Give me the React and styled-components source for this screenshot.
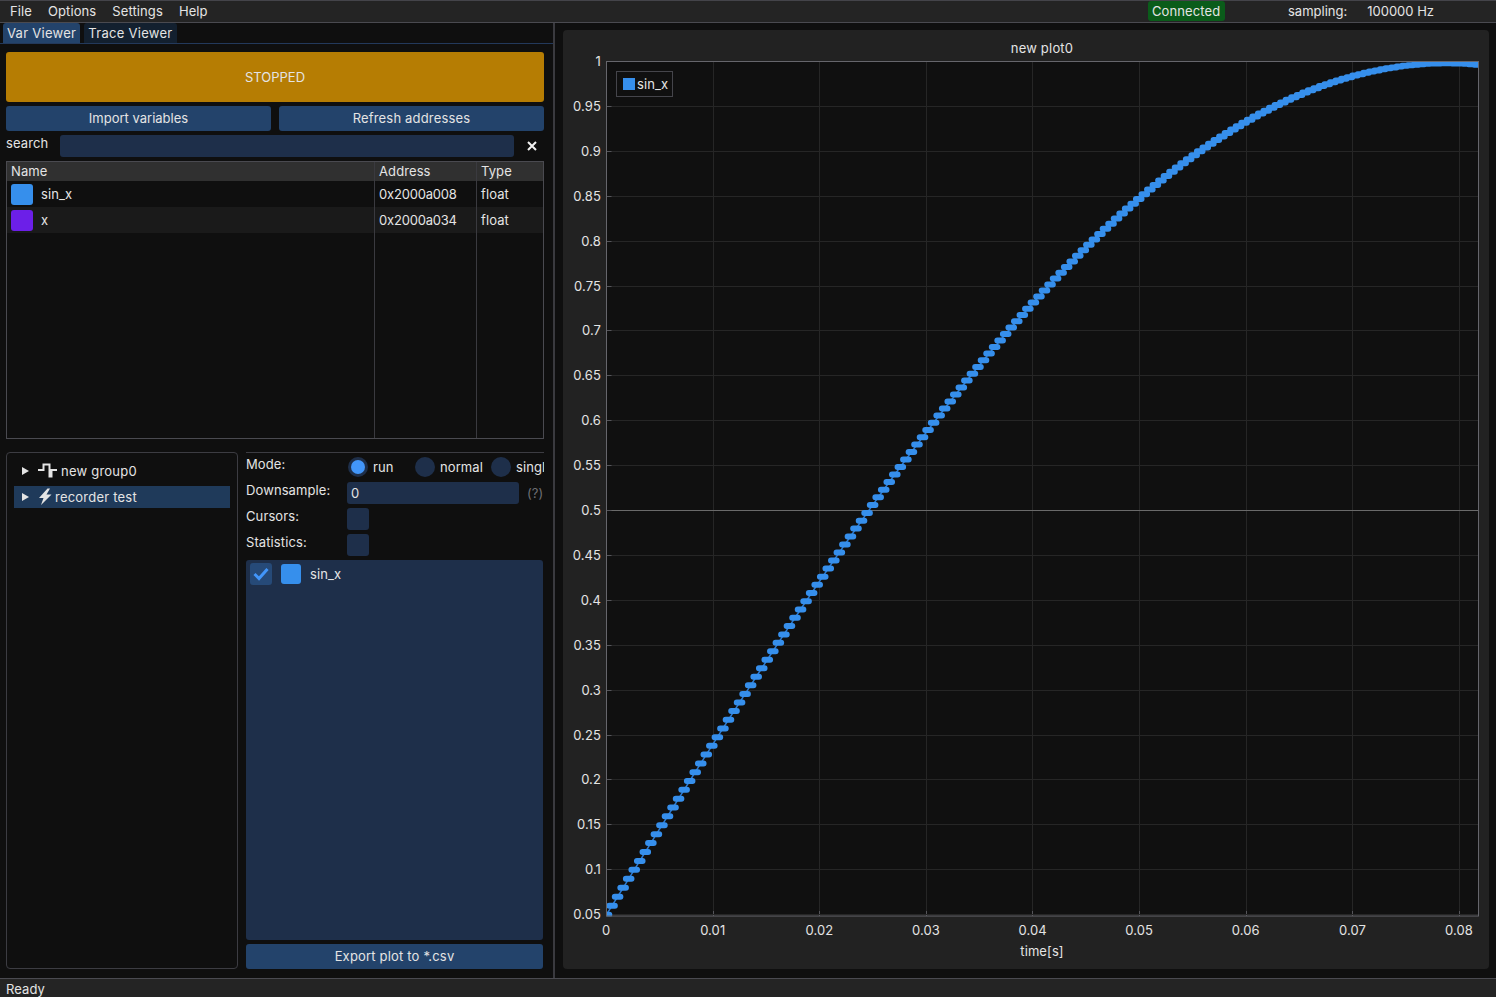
import React from "react";
import styled, { createGlobalStyle } from "styled-components";

const GlobalStyle = createGlobalStyle`
  html, body {
    margin: 0;
    padding: 0;
    background: #0f0f0f;
  }
  * {
    box-sizing: border-box;
  }
`;

const Page = styled.div`
  width: 1496px;
  height: 997px;
  display: flex;
  flex-direction: column;
  overflow: hidden;
  background: #0f0f0f;
  color: #e4e4e4;
  font-family: Inter, "Liberation Sans", sans-serif;
  font-size: 13px;
  line-height: 16px;
  letter-spacing: 0.1px;
`;

const MenuBar = styled.div`
  height: 23px;
  flex: none;
  display: flex;
  align-items: center;
  gap: 16px;
  padding: 0 10px 1px;
  background: #242424;
  border-top: 1px solid #44444a;
  border-bottom: 1px solid #4a4a50;
`;

const Connected = styled.div`
  margin-left: auto;
  height: 20px;
  width: 77px;
  padding-left: 4px;
  line-height: 20px;
  background: #0a5c1a;
  border-radius: 3px;
`;

const Sampling = styled.span`
  margin-left: 47px;
  letter-spacing: 0;
`;

const SamplingValue = styled.span`
  margin-left: 4px;
  margin-right: 52px;
  letter-spacing: 0;
`;

const Main = styled.div`
  flex: 1;
  min-height: 0;
  display: flex;
`;

const LeftColumn = styled.div`
  width: 553px;
  flex: none;
  display: flex;
  flex-direction: column;
  padding-bottom: 9px;
`;

const TabBar = styled.div`
  height: 21px;
  flex: none;
  display: flex;
  gap: 4px;
  padding-left: 3px;
  border-bottom: 1px solid #23395b;
`;

const Tab = styled.div`
  height: 20px;
  padding: 0 4px;
  line-height: 20px;
  letter-spacing: 0.28px;
  border-radius: 3px 3px 0 0;
  background: ${(p) => (p.$active ? "#23436b" : "#13202f")};
`;

const Content = styled.div`
  flex: 1;
  min-height: 0;
  display: flex;
  flex-direction: column;
  gap: 4px;
  padding: 8px 9px 0 6px;
`;

const StopButton = styled.div`
  height: 50px;
  flex: none;
  display: flex;
  align-items: center;
  justify-content: center;
  letter-spacing: 0;
  background: #b67d03;
  border-radius: 3px;
`;

const ButtonRow = styled.div`
  display: flex;
  gap: 8px;
  flex: none;
`;

const Button = styled.div`
  flex: 1;
  height: 25px;
  display: flex;
  align-items: center;
  justify-content: center;
  padding-bottom: 2px;
  letter-spacing: ${(p) => p.$spacing || 0}px;
  background: #23436b;
  border-radius: 3px;
`;

const SearchRow = styled.div`
  height: 22px;
  flex: none;
  display: flex;
  align-items: flex-start;
`;

const SearchLabel = styled.span`
  width: 54px;
  flex: none;
  line-height: 16px;
`;

const SearchInput = styled.div`
  width: 454px;
  height: 22px;
  background: #1e2f4a;
  border-radius: 3px;
`;

const ClearIcon = styled.svg`
  width: 10px;
  height: 10px;
  margin: 6px 0 0 13px;
`;

const Table = styled.div`
  height: 278px;
  flex: none;
  display: flex;
  flex-direction: column;
  border: 1px solid #4a4a50;
`;

const Row = styled.div`
  display: grid;
  grid-template-columns: 367px 102px 1fr;
  height: ${(p) => p.$height}px;
  flex: ${(p) => (p.$fill ? 1 : "none")};
  background: ${(p) => p.$bg || "transparent"};
`;

const Cell = styled.div`
  display: flex;
  align-items: center;
  gap: 8px;
  padding-left: 4px;
  letter-spacing: ${(p) => (p.$tight ? "-0.2px" : "inherit")};
  & + & {
    border-left: 1px solid #3a3a3f;
  }
`;

const HeaderCell = styled(Cell)`
  padding-bottom: 2px;
`;

const Swatch = styled.div`
  width: 22px;
  height: 21px;
  flex: none;
  border-radius: 3px;
  background: ${(p) => p.$color};
`;

const Bottom = styled.div`
  flex: 1;
  min-height: 0;
  display: flex;
  gap: 8px;
  margin-top: 9px;
`;

const TreePanel = styled.div`
  width: 232px;
  flex: none;
  display: flex;
  flex-direction: column;
  gap: 4px;
  padding: 7px 7px;
  border: 1px solid #3c3c42;
  border-radius: 4px;
`;

const TreeRow = styled.div`
  height: 22px;
  display: flex;
  align-items: center;
  padding-left: 8px;
  letter-spacing: 0.22px;
  background: ${(p) => (p.$selected ? "#1f3a5a" : "transparent")};
`;

const TreeLabel = styled.span`
  margin-bottom: 1px;
`;

const Arrow = styled.svg`
  width: 7px;
  height: 8px;
  flex: none;
  margin-right: 9px;
`;

const TreeIcon = styled.svg`
  width: ${(p) => p.$width}px;
  height: 18px;
  flex: none;
  margin-right: 3px;
`;

const Settings = styled.div`
  flex: 1;
  min-width: 0;
  display: flex;
  flex-direction: column;
  gap: 4px;
  padding-top: 3px;
  border-top: 1px solid #3c3c42;
`;

const SettingRow = styled.div`
  height: 22px;
  flex: none;
  display: flex;
  align-items: flex-start;
  overflow: hidden;
`;

const SettingLabel = styled.span`
  width: 101px;
  flex: none;
  line-height: 16px;
`;

const RadioGroup = styled.div`
  display: flex;
  margin: 1px 0 0 1px;
`;

const Radio = styled.div`
  width: 20px;
  height: 20px;
  flex: none;
  border-radius: 50%;
  background: #1e2f4a;
  display: flex;
  align-items: center;
  justify-content: center;
  &::after {
    content: "";
    display: ${(p) => (p.$checked ? "block" : "none")};
    width: 14px;
    height: 14px;
    border-radius: 50%;
    background: #4296fa;
  }
`;

const RadioLabel = styled.span`
  width: ${(p) => p.$width}px;
  flex: none;
  margin-left: 5px;
  line-height: 20px;
  white-space: nowrap;
`;

const NumberInput = styled.div`
  width: 172px;
  height: 22px;
  padding-left: 4px;
  line-height: 22px;
  background: #1e2f4a;
  border-radius: 3px;
`;

const Hint = styled.span`
  margin-left: 8px;
  line-height: 22px;
  color: #6e6e73;
`;

const CheckBox = styled.div`
  width: 22px;
  height: 22px;
  flex: none;
  display: flex;
  align-items: center;
  justify-content: center;
  border-radius: 3px;
  background: ${(p) => (p.$list ? "#264a78" : "#1e2f4a")};
`;

const SeriesList = styled.div`
  flex: 1;
  min-height: 0;
  width: 297px;
  padding: 3px 4px;
  background: #1e2f4a;
  border-radius: 3px;
`;

const SeriesRow = styled.div`
  display: flex;
  align-items: center;
`;

const SeriesSwatch = styled.div`
  width: 20px;
  height: 20px;
  flex: none;
  margin-left: 9px;
  border-radius: 3px;
  background: #368fec;
`;

const SeriesName = styled.span`
  margin-left: 9px;
  line-height: 16px;
  margin-top: -1px;
`;

const ExportButton = styled(Button)`
  flex: none;
  width: 297px;
`;

const Divider = styled.div`
  width: 2px;
  flex: none;
  background: #3a3a3f;
`;

const PlotArea = styled.div`
  flex: 1;
  min-width: 0;
  padding: 7px 7px 9px 8px;
`;

const PlotPanel = styled.div`
  position: relative;
  width: 926px;
  height: 939px;
  background: #222222;
  border-radius: 4px;
`;

const Chart = styled.svg`
  display: block;
  width: 100%;
  height: 100%;
  font-family: Inter, "Liberation Sans", sans-serif;
  font-size: 13px;
`;

const Legend = styled.div`
  position: absolute;
  left: 53px;
  top: 41px;
  height: 26px;
  display: flex;
  align-items: center;
  gap: 2px;
  padding: 0 4px 0 6px;
  background: #101010;
  border: 1px solid #45454b;
`;

const LegendKey = styled.div`
  width: 12px;
  height: 12px;
  background: #368fec;
`;

const LegendText = styled.span`
  margin-bottom: 1px;
`;

const StatusBar = styled.div`
  height: 19px;
  flex: none;
  padding: 2px 6px 0;
  background: #242424;
  border-top: 1px solid #4a4a50;
`;

// plot coordinates in page pixels (the svg viewBox starts at the panel corner)
const PLOT = { left: 606.5, right: 1478.5, top: 61.5, bottom: 916 };
const X_PER_SEC = 10662;
const Y_PER_UNIT = 898;
const xAt = (t) => PLOT.left + t * X_PER_SEC;
const yAt = (v) => PLOT.top + (1 - v) * Y_PER_UNIT;
const crisp = (n) => Math.floor(n) + 0.5;

const xTicks = [0, 0.01, 0.02, 0.03, 0.04, 0.05, 0.06, 0.07, 0.08];
const yTicks = Array.from({ length: 20 }, (_, i) => (20 - i) * 0.05);

const fmt = (v) => String(Number(v.toFixed(2)));

const STEP = 0.00052;
const samples = Array.from({ length: 160 }, (_, k) => {
  const t = k * STEP;
  return { t, y: yAt(0.998 * Math.sin(19.3 * t + 0.05)) };
});

const stairs = samples.map((s) => `M${xAt(s.t) - 2.8} ${s.y}H${xAt(s.t) + 2.8}`).join("");
const link = "M" + samples.map((s) => `${xAt(s.t)} ${s.y}`).join("L");

const Plot = () => (
  <Chart viewBox="563 30 926 939">
    <defs>
      <clipPath id="plot-clip">
        <rect x={PLOT.left} y={PLOT.top - 0.5} width={PLOT.right - PLOT.left} height={PLOT.bottom - PLOT.top + 1} />
      </clipPath>
    </defs>
    <text x="1042" y="53" textAnchor="middle" fill="#e4e4e4" letterSpacing="0.2">new plot0</text>
    <rect x={PLOT.left} y={PLOT.top} width={PLOT.right - PLOT.left} height={PLOT.bottom - PLOT.top} fill="#101010" />
    {xTicks.map((t) => (
      <g key={t}>
        <line x1={crisp(xAt(t))} x2={crisp(xAt(t))} y1={PLOT.top} y2={PLOT.bottom} stroke="#262626" />
        <line x1={crisp(xAt(t))} x2={crisp(xAt(t))} y1={PLOT.bottom - 5} y2={PLOT.bottom} stroke="#55555a" />
        <text x={xAt(t) - 0.4} y="935" textAnchor="middle" fill="#e4e4e4">{fmt(t)}</text>
      </g>
    ))}
    {yTicks.map((v) => (
      <g key={v}>
        <line
          x1={PLOT.left}
          x2={PLOT.right}
          y1={crisp(yAt(v))}
          y2={crisp(yAt(v))}
          stroke={Math.abs(v - 0.5) < 0.001 ? "#6a6a6a" : "#262626"}
        />
        <line x1={PLOT.left} x2={PLOT.left + 5} y1={crisp(yAt(v))} y2={crisp(yAt(v))} stroke="#55555a" />
        <text x="601" y={yAt(v) + 4.5} textAnchor="end" fill="#e4e4e4">{fmt(v)}</text>
      </g>
    ))}
    <g clipPath="url(#plot-clip)" fill="none">
      <path d={link} stroke="#2c7ad0" strokeWidth="1.5" />
      <path d={stairs} stroke="#368fec" strokeWidth="6" strokeLinecap="round" />
    </g>
    <rect
      x={PLOT.left}
      y={PLOT.top}
      width={PLOT.right - PLOT.left}
      height={PLOT.bottom - PLOT.top}
      fill="none"
      stroke="#66666c"
    />
    <text x="1042" y="956" textAnchor="middle" fill="#e4e4e4">time[s]</text>
  </Chart>
);

const ExpandArrow = () => (
  <Arrow viewBox="0 0 7 8">
    <path d="M0 0L7 4L0 8Z" fill="#e4e4e4" />
  </Arrow>
);

const App = () => (
  <Page>
    <GlobalStyle />
    <MenuBar>
      <span>File</span>
      <span>Options</span>
      <span>Settings</span>
      <span>Help</span>
      <Connected>Connected</Connected>
      <Sampling>sampling:</Sampling>
      <SamplingValue>100000 Hz</SamplingValue>
    </MenuBar>
    <Main>
      <LeftColumn>
        <TabBar>
          <Tab $active>Var Viewer</Tab>
          <Tab>Trace Viewer</Tab>
        </TabBar>
        <Content>
          <StopButton>STOPPED</StopButton>
          <ButtonRow>
            <Button>Import variables</Button>
            <Button $spacing={0.18}>Refresh addresses</Button>
          </ButtonRow>
          <SearchRow>
            <SearchLabel>search</SearchLabel>
            <SearchInput />
            <ClearIcon viewBox="0 0 10 10">
              <path d="M1 1L9 9M9 1L1 9" stroke="#f2f2f2" strokeWidth="2" />
            </ClearIcon>
          </SearchRow>
          <Table>
            <Row $height={19} $bg="#303030">
              <HeaderCell>Name</HeaderCell>
              <HeaderCell>Address</HeaderCell>
              <HeaderCell>Type</HeaderCell>
            </Row>
            <Row $height={26}>
              <Cell><Swatch $color="#368fec" />sin_x</Cell>
              <Cell $tight>0x2000a008</Cell>
              <Cell>float</Cell>
            </Row>
            <Row $height={26} $bg="#1a1a1a">
              <Cell><Swatch $color="#6c1fe8" />x</Cell>
              <Cell $tight>0x2000a034</Cell>
              <Cell>float</Cell>
            </Row>
            <Row $fill>
              <Cell />
              <Cell />
              <Cell />
            </Row>
          </Table>
          <Bottom>
            <TreePanel>
              <TreeRow>
                <ExpandArrow />
                <TreeIcon $width={20} viewBox="0 0 20 18">
                  <path d="M0 8H5.5V2.5H11.5V14.5H13.5V8H19" fill="none" stroke="#e4e4e4" strokeWidth="2" />
                </TreeIcon>
                <TreeLabel>new group0</TreeLabel>
              </TreeRow>
              <TreeRow $selected>
                <ExpandArrow />
                <TreeIcon $width={14} viewBox="0 0 14 18">
                  <path d="M9.5 0.5L1 10H5.5L3 17L13.5 6.5H8.5L12 0.5Z" fill="#e4e4e4" />
                </TreeIcon>
                <TreeLabel>recorder test</TreeLabel>
              </TreeRow>
            </TreePanel>
            <Settings>
              <SettingRow>
                <SettingLabel>Mode:</SettingLabel>
                <RadioGroup>
                  <Radio $checked />
                  <RadioLabel $width={42}>run</RadioLabel>
                  <Radio />
                  <RadioLabel $width={51}>normal</RadioLabel>
                  <Radio />
                  <RadioLabel $width={40}>single</RadioLabel>
                </RadioGroup>
              </SettingRow>
              <SettingRow>
                <SettingLabel>Downsample:</SettingLabel>
                <NumberInput>0</NumberInput>
                <Hint>(?)</Hint>
              </SettingRow>
              <SettingRow>
                <SettingLabel>Cursors:</SettingLabel>
                <CheckBox />
              </SettingRow>
              <SettingRow>
                <SettingLabel>Statistics:</SettingLabel>
                <CheckBox />
              </SettingRow>
              <SeriesList>
                <SeriesRow>
                  <CheckBox $list>
                    <svg width="16" height="14" viewBox="0 0 16 14">
                      <path d="M1.5 7L6 11.5L14.5 2" fill="none" stroke="#4296fa" strokeWidth="3" />
                    </svg>
                  </CheckBox>
                  <SeriesSwatch />
                  <SeriesName>sin_x</SeriesName>
                </SeriesRow>
              </SeriesList>
              <ExportButton $spacing={0.18}>Export plot to *.csv</ExportButton>
            </Settings>
          </Bottom>
        </Content>
      </LeftColumn>
      <Divider />
      <PlotArea>
        <PlotPanel>
          <Plot />
          <Legend>
            <LegendKey />
            <LegendText>sin_x</LegendText>
          </Legend>
        </PlotPanel>
      </PlotArea>
    </Main>
    <StatusBar>Ready</StatusBar>
  </Page>
);

export default App;
